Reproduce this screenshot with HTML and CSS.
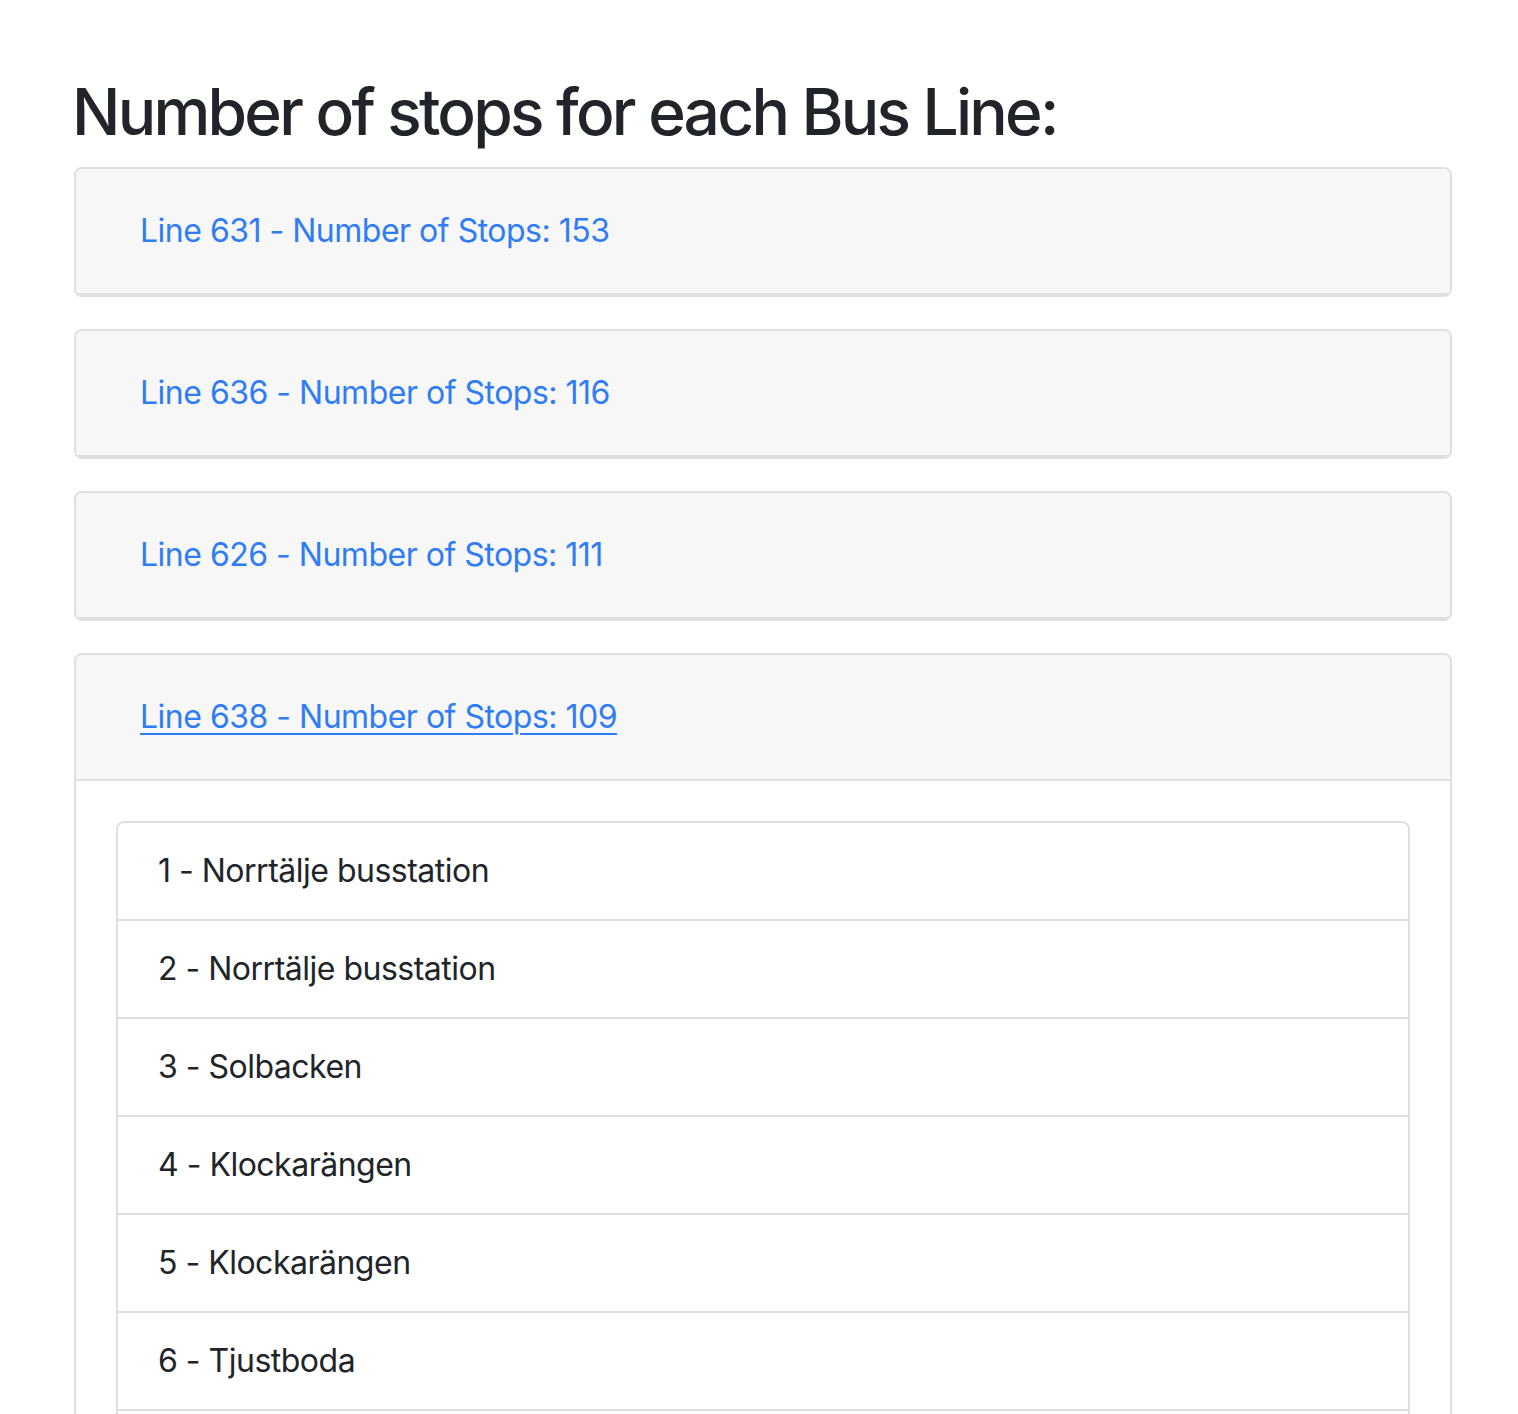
FILE: index.html
```html
<!DOCTYPE html>
<html lang="en">
<head>
<meta charset="utf-8">
<title>Bus Lines</title>
<link rel="stylesheet" href="styles.css">
</head>
<body>
<div class="container">
  <h2 class="title">Number of stops for each Bus Line:</h2>
  <div class="accordion">
    <div class="card">
      <div class="card-header"><h5 class="hdr"><a class="btn-link" href="#">Line 631 - Number of Stops: 153</a></h5></div>
    </div>
    <div class="card">
      <div class="card-header"><h5 class="hdr"><a class="btn-link" href="#">Line 636 - Number of Stops: 116</a></h5></div>
    </div>
    <div class="card">
      <div class="card-header"><h5 class="hdr"><a class="btn-link" href="#">Line 626 - Number of Stops: 111</a></h5></div>
    </div>
    <div class="card open">
      <div class="card-header"><h5 class="hdr"><a class="btn-link hover" href="#">Line 638 - Number of Stops: 109</a></h5></div>
      <div class="card-body">
        <ul class="list-group">
          <li class="list-item">1 - Norrtälje busstation</li>
          <li class="list-item">2 - Norrtälje busstation</li>
          <li class="list-item">3 - Solbacken</li>
          <li class="list-item">4 - Klockarängen</li>
          <li class="list-item">5 - Klockarängen</li>
          <li class="list-item">6 - Tjustboda</li>
          <li class="list-item">7 - Tjustboda</li>
        </ul>
      </div>
    </div>
  </div>
</div>
</body>
</html>
```
FILE: styles.css
```css
* { box-sizing: border-box; }
html, body { margin: 0; padding: 0; background: #fff; }
body {
  font-family: Inter, "Noto Sans", "Liberation Sans", sans-serif;
  color: #212529;
  font-size: 32px;
  line-height: 1.5;
  letter-spacing: -0.5px;
}
.container {
  width: 1378px;
  margin-left: 74px;
  padding-top: 74px;
}
.title {
  margin: 0 0 16px -2px;
  font-size: 64px;
  font-weight: 500;
  line-height: 1.2;
  letter-spacing: -2.75px;
  color: #212529;
}
.accordion { display: flex; flex-direction: column; gap: 32px; }
.card {
  border: 2px solid #dfdfdf;
  border-radius: 8px;
  background: #fff;
  overflow: hidden;
}
.card-header {
  background: #f7f7f7;
  border-bottom: 2px solid #dfdfdf;
  padding: 24px 40px;
}
.hdr { margin: 0; font-size: 32px; font-weight: 400; line-height: 1.5; }
.btn-link {
  display: inline-block;
  padding: 12px 24px 12px 22px;
  border: 2px solid transparent;
  color: #2e7cf6;
  text-decoration: none;
  line-height: 48px;
}
.btn-link.hover { text-decoration: underline; text-underline-offset: 5px; text-decoration-thickness: 2px; }
.card-body { padding: 40px; }
.list-group {
  list-style: none;
  margin: 0;
  padding: 0;
  border: 2px solid #dfdfdf;
  border-radius: 8px;
}
.list-item {
  padding: 24px 40px;
  line-height: 48px;
  border-top: 2px solid #dfdfdf;
}
.list-item:first-child { border-top: 0; }
```
